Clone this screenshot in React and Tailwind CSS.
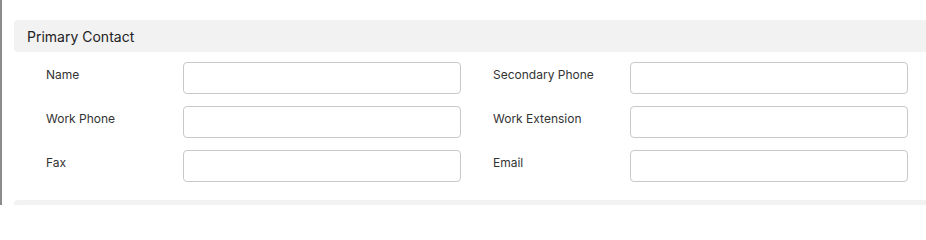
import React from "react";

const rows = [
  ["Name", "Secondary Phone"],
  ["Work Phone", "Work Extension"],
  ["Fax", "Email"],
];

function Field({ label }) {
  return (
    <div className="flex items-start">
      <label className="w-[137px] pt-[5px] text-[12px] leading-[16px] text-[#333333]">{label}</label>
      <input
        type="text"
        className="h-[32px] w-[278px] rounded-[4px] border border-[#c9c9c9] bg-white outline-none"
      />
    </div>
  );
}

export default function App() {
  return (
    <div
      className="h-[205px] w-[926px] overflow-hidden border-l-2 border-[#8c8c8c] bg-white pt-[20px]"
      style={{ fontFamily: "Inter, 'Noto Sans', Arial, sans-serif" }}
    >
      <div className="ml-[12px]">
        <div className="flex h-[32px] items-center rounded-l-[4px] bg-[#f2f2f2] pl-[13px] text-[14px] text-[#222222]">
          Primary Contact
        </div>
        <div className="flex flex-col gap-[12px] pb-[18px] pl-[32px] pt-[10px]">
          {rows.map(([a, b]) => (
            <div key={a} className="flex gap-[32px]">
              <Field label={a} />
              <Field label={b} />
            </div>
          ))}
        </div>
        <div className="h-[32px] rounded-l-[4px] bg-[#f2f2f2]" />
      </div>
    </div>
  );
}
